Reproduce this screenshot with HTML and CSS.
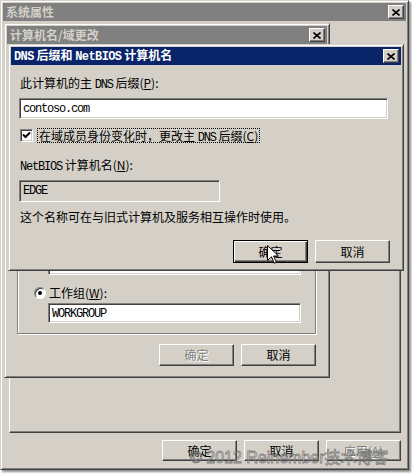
FILE: index.html
```html
<!DOCTYPE html>
<html lang="zh-CN">
<head>
<meta charset="utf-8">
<title>系统属性</title>
<link rel="stylesheet" href="styles.css">
</head>
<body>
<div class="desktop">

  <div class="win win-outer">
    <div class="titlebar inactive">
      <span class="title">系统属性</span>
      <span class="xbtn"><svg width="8" height="7" viewBox="0 0 8 7"><path d="M0.5 0.5 L7.5 6.5 M7.5 0.5 L0.5 6.5" stroke="#000" stroke-width="1.6"/></svg></span>
    </div>
    <div class="outer-body">
      <div class="tabpage"></div>
      <div class="btnrow">
        <div class="btn">确定</div>
        <div class="btn">取消</div>
        <div class="btn disabled">应用(<u>A</u>)</div>
      </div>
    </div>
  </div>

  <div class="win win-second">
    <div class="titlebar inactive">
      <span class="title">计算机名/域更改</span>
      <span class="xbtn"><svg width="8" height="7" viewBox="0 0 8 7"><path d="M0.5 0.5 L7.5 6.5 M7.5 0.5 L0.5 6.5" stroke="#000" stroke-width="1.6"/></svg></span>
    </div>
    <div class="second-body">
      <div class="group">
        <div class="radio-row"><span class="radio"></span><span>域(<u>D</u>):</span></div>
        <div class="field indent"></div>
        <div class="radio-row gap"><span class="radio checked"></span><span>工作组(<u>W</u>):</span></div>
        <div class="field indent wg"><span class="mono">WORKGROUP</span></div>
      </div>
      <div class="btnrow">
        <div class="btn small disabled">确定</div>
        <div class="btn small">取消</div>
      </div>
    </div>
  </div>

  <div class="win win-third">
    <div class="titlebar active">
      <span class="title"><span class="lat b">DNS</span> 后缀和 <span class="lat b">NetBIOS</span> 计算机名</span>
      <span class="xbtn"><svg width="8" height="7" viewBox="0 0 8 7"><path d="M0.5 0.5 L7.5 6.5 M7.5 0.5 L0.5 6.5" stroke="#000" stroke-width="1.6"/></svg></span>
    </div>
    <div class="third-body">
      <div class="label">此计算机的主 <span class="lat">DNS</span> 后缀(<u>P</u>):</div>
      <div class="field dns"><span class="mono">contoso.com</span></div>
      <div class="check-row">
        <span class="checkbox"><svg width="9" height="9" viewBox="0 0 9 9"><path d="M1 3.5 L3.5 6 L8 1.5" fill="none" stroke="#000" stroke-width="2"/></svg></span>
        <span class="focus">在域成员身份变化时，更改主 <span class="lat">DNS</span> 后缀(<u>C</u>)</span>
      </div>
      <div class="label nb"><span class="lat">NetBIOS</span> 计算机名(<u>N</u>):</div>
      <div class="field ro"><span class="mono">EDGE</span></div>
      <div class="label note">这个名称可在与旧式计算机及服务相互操作时使用。</div>
      <div class="btnrow third-btns">
        <div class="btn default"><span>确定</span></div>
        <div class="btn tall">取消</div>
      </div>
    </div>
  </div>

  <svg class="cursor" width="12" height="19" viewBox="0 0 12 19"><path d="M0.5 0.5 V15.5 L4.5 11.8 L7.3 18.3 L9.4 17.4 L6.6 11 H11.5 Z" fill="#fff" stroke="#000" stroke-width="1"/></svg>

  <div class="watermark">© 2012 Reinember技术博客</div>
</div>
</body>
</html>
```

FILE: styles.css
```css
* { box-sizing: border-box; }

body {
  margin: 0;
  background: #fff;
  font-family: "Noto Sans CJK SC", "Noto Sans", sans-serif;
  font-size: 12px;
  line-height: 14px;
  color: #000;
}

.desktop {
  position: relative;
  width: 414px;
  height: 474px;
  overflow: hidden;
}

/* classic window frame */
.win {
  position: absolute;
  display: flex;
  flex-direction: column;
  background: #d4d0c8;
  border: 1px solid;
  border-color: #d4d0c8 #404040 #404040 #d4d0c8;
  box-shadow: inset 1px 1px #fff, inset -1px -1px #808080;
  padding: 2px;
}

.win-outer {
  left: 0;
  top: 0;
  width: 409px;
  height: 470px;
  box-shadow: inset 1px 1px #fff, inset -1px -1px #808080, 2px 2px 2px rgba(0, 0, 0, 0.45);
}

.win-second {
  left: 4px;
  top: 23px;
  width: 326px;
  height: 355px;
}

.win-third {
  left: 8px;
  top: 44px;
  width: 396px;
  height: 227px;
}

.titlebar {
  height: 18px;
  flex: none;
  display: flex;
  align-items: center;
  justify-content: space-between;
  padding: 0 2px 0 3px;
  font-weight: bold;
}

.inactive { background: #808080; color: #d4d0c8; }
.active { background: #0a246a; color: #fff; }

.title { white-space: nowrap; }

.xbtn {
  width: 16px;
  height: 14px;
  display: flex;
  align-items: center;
  justify-content: center;
  background: #d4d0c8;
  border: 1px solid;
  border-color: #fff #404040 #404040 #fff;
  box-shadow: inset -1px -1px #808080;
}

/* buttons */
.btnrow {
  display: flex;
  justify-content: flex-end;
  gap: 7px;
  flex: none;
}

.btn {
  width: 75px;
  height: 21px;
  display: flex;
  align-items: center;
  justify-content: center;
  background: #d4d0c8;
  border: 1px solid;
  border-color: #fff #404040 #404040 #fff;
  box-shadow: inset -1px -1px #808080;
}

.btn.small { height: 22px; }
.btn.tall { height: 23px; }

.btn.disabled {
  color: #808080;
  text-shadow: 1px 1px 0 #fff;
}

.btn.default {
  height: 23px;
  border: 1px solid #000;
  box-shadow: inset 1px 1px #fff, inset -1px -1px #404040, inset -2px -2px #808080;
}

/* outer body */
.outer-body {
  flex: 1;
  display: flex;
  flex-direction: column;
  padding: 30px 5px 6px 6px;
}

.tabpage {
  flex: 1;
  border: 1px solid;
  border-color: #fff #404040 #404040 #fff;
  box-shadow: inset -1px -1px #808080;
}

.outer-body .btnrow { margin-top: 7px; }

/* second window */
.second-body {
  flex: 1;
  display: flex;
  flex-direction: column;
  padding: 100px 11px 9px 10px;
}

.group {
  flex: 1;
  display: flex;
  flex-direction: column;
  justify-content: flex-end;
  padding: 0 14px 10px 16px;
  border: 1px solid #808080;
  box-shadow: inset 1px 1px #fff, 1px 1px #fff;
}

.second-body .btnrow { margin-top: 10px; }

.radio-row {
  display: flex;
  align-items: center;
  gap: 3px;
  height: 14px;
  margin-bottom: 3px;
}

.radio-row.gap { margin-top: 11px; }

.radio {
  width: 12px;
  height: 12px;
  border-radius: 50%;
  background: #fff;
  border: 1px solid;
  border-color: #808080 #fff #fff #808080;
  box-shadow: inset 1px 1px #404040;
  display: flex;
  align-items: center;
  justify-content: center;
}

.radio.checked::after {
  content: "";
  width: 4px;
  height: 4px;
  border-radius: 50%;
  background: #000;
}

/* fields */
.field {
  height: 20px;
  display: flex;
  align-items: flex-start;
  padding: 3px 3px 0;
  background: #fff;
  border: 1px solid;
  border-color: #808080 #fff #fff #808080;
  box-shadow: inset 1px 1px #404040, inset -1px -1px #d4d0c8;
  overflow: hidden;
}

.field.indent { margin-left: 14px; }

.field.dns { height: 21px; margin-top: 6px; }

.field.ro {
  width: 201px;
  height: 22px;
  margin-top: 6px;
  background: #d4d0c8;
}

.mono, .lat {
  font-family: "Liberation Mono", monospace;
  font-size: 12px;
  letter-spacing: -1.2px;
}

.lat.b { font-weight: bold; letter-spacing: -0.6px; }

/* third window */
.third-body {
  flex: 1;
  display: flex;
  flex-direction: column;
  padding: 11px 13px 9px 8px;
}

.label { padding-left: 1px; white-space: nowrap; }
.label.nb { margin-top: 15px; }
.label.note { margin-top: 8px; }

.check-row {
  display: flex;
  align-items: center;
  height: 15px;
  margin-top: 9px;
  padding-left: 1px;
}

.checkbox {
  width: 13px;
  height: 13px;
  flex: none;
  display: flex;
  align-items: center;
  justify-content: center;
  background: #fff;
  border: 1px solid;
  border-color: #808080 #fff #fff #808080;
  box-shadow: inset 1px 1px #404040, inset -1px -1px #d4d0c8;
}

.focus {
  margin-left: 4px;
  padding: 0 1px;
  height: 15px;
  border: 1px dotted #000;
  line-height: 13px;
  white-space: nowrap;
}

.third-btns {
  margin-top: 16px;
  margin-right: -2px;
}

/* overlays */
.cursor {
  position: absolute;
  left: 267px;
  top: 245px;
}

.watermark {
  position: absolute;
  left: 190px;
  top: 449px;
  font-family: "Liberation Sans", "Noto Sans CJK SC", sans-serif;
  font-size: 16px;
  line-height: 18px;
  white-space: nowrap;
  color: rgba(255, 255, 255, 0.3);
  -webkit-text-stroke: 0.8px rgba(100, 100, 100, 0.75);
}
```
